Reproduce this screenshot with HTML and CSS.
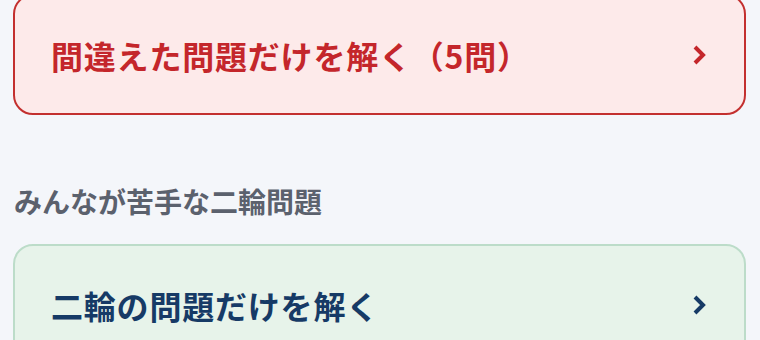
FILE: index.html
```html
<!DOCTYPE html>
<html lang="ja">
<head>
  <meta charset="UTF-8">
  <title>問題一覧</title>
  <link rel="stylesheet" href="styles.css">
</head>
<body>
  <div class="page">
    <a class="action-card wrong" href="#">
      <span class="action-label">間違えた問題だけを解く（5問）</span>
      <svg class="chevron" width="14" height="20" viewBox="0 0 14 20"><polyline points="3,2 11,10 3,18" fill="none" stroke="currentColor" stroke-width="4"/></svg>
    </a>

    <h3 class="section-title">みんなが苦手な二輪問題</h3>

    <a class="action-card bike" href="#">
      <span class="action-label">二輪の問題だけを解く</span>
      <svg class="chevron" width="14" height="20" viewBox="0 0 14 20"><polyline points="3,2 11,10 3,18" fill="none" stroke="currentColor" stroke-width="4"/></svg>
    </a>
  </div>
</body>
</html>
```
FILE: styles.css
```css
body {
  margin: 0;
  background: #f4f6fa;
  font-family: "Noto Sans CJK JP", "Noto Sans", sans-serif;
}
.page {
  margin-top: -6px;
  padding: 0 14px 0 13px;
}
.action-card {
  display: flex;
  align-items: center;
  justify-content: space-between;
  box-sizing: border-box;
  height: 121px;
  padding: 0 38px 0 36px;
  border-radius: 20px;
  border: 2px solid;
  text-decoration: none;
}
.action-label {
  font-size: 32px;
  font-weight: 700;
  line-height: 48px;
  letter-spacing: 0.8px;
}
.chevron {
  display: block;
}
.wrong {
  background: #fdeaea;
  border-color: #c3302f;
  color: #c4262b;
}
.bike {
  background: #e7f3ea;
  border-color: #bcdcc9;
  color: #163a66;
}
.section-title {
  margin: 66px 0 23px 1px;
  font-size: 28px;
  line-height: 40px;
  font-weight: 700;
  color: #5b616d;
}
```
